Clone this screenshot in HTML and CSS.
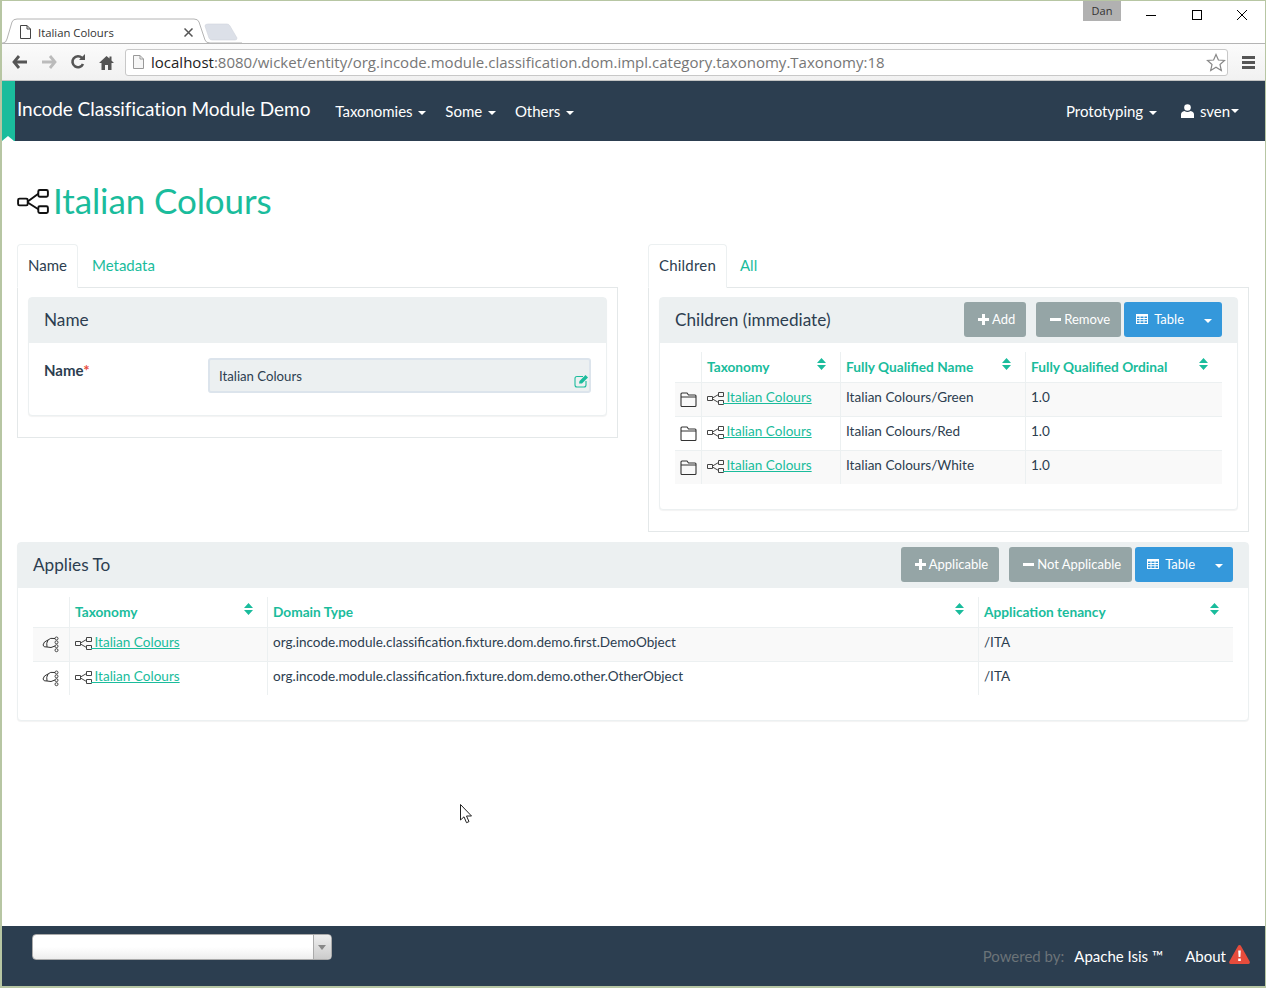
FILE: index.html
```html
<!DOCTYPE html>
<html lang="en">
<head>
    <meta charset="UTF-8">
    <title>Italian Colours</title>
    <link rel="stylesheet" href="styles.css">
</head>
<body>
    <svg class="defs" width="0" height="0">
        <symbol id="tree" viewBox="0 0 33 26">
            <rect x="1" y="10" width="10" height="7" rx="1.5" fill="none" stroke="currentColor" stroke-width="2"/>
            <rect x="22" y="1" width="10" height="7" rx="1.5" fill="none" stroke="currentColor" stroke-width="2"/>
            <rect x="22" y="18" width="10" height="7" rx="1.5" fill="none" stroke="currentColor" stroke-width="2"/>
            <path d="M11 13 L22 5 M11 14 L22 21" fill="none" stroke="currentColor" stroke-width="2"/>
        </symbol>
        <symbol id="mini" viewBox="0 0 17 13">
            <path d="M.5 4.500 H5.500 V8.500 H.5 Z M11.500 .5 H16.500 V4.500 H11.500 Z M11.500 8.500 H16.500 V12.500 H11.500 Z" fill="none" stroke="#444"/>
            <path d="M5.500 6 L11.500 2.500 M5.500 7 L11.500 10.500" fill="none" stroke="#444"/>
        </symbol>
        <symbol id="folder" viewBox="0 0 17 15">
            <path d="M1 13.5 V2 Q1 1 2 1 H7 L8.5 3 H15 Q16 3 16 4 V5 H1.500 M1 13.500 Q1 14.500 2 14.500 H15 Q16 14.500 16 13.500 V5" fill="none" stroke="#333" stroke-width="1.100"/>
        </symbol>
        <symbol id="cloud" viewBox="0 0 17 17">
            <path d="M13 2.500 Q8 1.500 6 4 Q1.500 5.500 1 9 Q1.500 11.500 5 11 Q9 12.500 13 10" fill="none" stroke="#333" stroke-width="1"/>
            <path d="M6 4 Q4 7 5 11" fill="none" stroke="#333" stroke-width="1"/>
            <circle cx="14.500" cy="2.500" r="1.500" fill="#fff" stroke="#333" stroke-width="0.900"/>
            <circle cx="14.500" cy="6.300" r="1.500" fill="#fff" stroke="#333" stroke-width="0.900"/>
            <circle cx="14.500" cy="10.200" r="1.500" fill="#fff" stroke="#333" stroke-width="0.900"/>
            <circle cx="14.500" cy="14.200" r="1.500" fill="#fff" stroke="#333" stroke-width="0.900"/>
        </symbol>
        <symbol id="sort" viewBox="0 0 9 12">
            <path d="M4.500 0 L9 5 H0 Z M0 7 H9 L4.500 12 Z" fill="#1abc9c"/>
        </symbol>
        <symbol id="grid" viewBox="0 0 12 10">
            <path d="M0 0 H12 V10 H0 Z M1 2.500 V4 H3.500 V2.500 Z M4.500 2.500 V4 H7.500 V2.500 Z M8.500 2.500 V4 H11 V2.500 Z M1 5 V6.300 H3.500 V5 Z M4.500 5 V6.300 H7.500 V5 Z M8.500 5 V6.300 H11 V5 Z M1 7.300 V9 H3.500 V7.300 Z M4.500 7.300 V9 H7.500 V7.300 Z M8.500 7.300 V9 H11 V7.300 Z" fill="#fff" fill-rule="evenodd"/>
        </symbol>
    </svg>

    <div class="window">
        <div class="tabstrip">
            <svg class="tab-shape" width="240" height="26" viewBox="0 0 240 26">
                <path d="M203 8 Q203 6 206 6 H225 Q227 6 228 8 L235 20 Q235 22 233 22 H210 Q208 22 207 20 Z" fill="#dce0e8" stroke="#d0d4dc" stroke-width="0.600"/>
                <path d="M0 25 H1 Q4 25 5 21 L10 4 Q11 1 15 1 H192 Q196 1 197 4 L203 22 Q204 25 208 25 H240" fill="#fff" stroke="#b4b4b4"/>
            </svg>
            <div class="tab">
                <svg class="page-icon" width="11" height="14" viewBox="0 0 11 14">
                    <path d="M.5 .5 H7 L10.500 4 V13.500 H.5 Z M7 .5 V4 H10.500" fill="#fff" stroke="#444"/>
                </svg>
                <span class="tab-title">Italian Colours</span>
                <svg class="tab-close" width="9" height="9" viewBox="0 0 9 9"><path d="M.5 .5 L8.500 8.500 M8.500 .5 L.5 8.500" stroke="#555" stroke-width="1.500"/></svg>
            </div>
            <span class="profile">Dan</span>
            <div class="win-buttons">
                <svg width="12" height="12" viewBox="0 0 12 12"><path d="M1 6.500 H11" stroke="#000"/></svg>
                <svg width="12" height="12" viewBox="0 0 12 12"><rect x="1.500" y="1.500" width="9" height="9" fill="none" stroke="#000"/></svg>
                <svg width="12" height="12" viewBox="0 0 12 12"><path d="M1 1 L11 11 M11 1 L1 11" stroke="#000"/></svg>
            </div>
        </div>

        <div class="toolbar">
            <svg class="tool" width="16" height="14" viewBox="0 0 16 14"><path d="M7 1 L2 7 L7 13 M2 7 H15" fill="none" stroke="#555" stroke-width="2.800"/></svg>
            <svg class="tool" width="16" height="14" viewBox="0 0 16 14"><path d="M9 1 L14 7 L9 13 M14 7 H1" fill="none" stroke="#bbb" stroke-width="2.800"/></svg>
            <svg class="tool" width="16" height="16" viewBox="0 0 16 16"><path d="M13 10 A5.500 5.500 0 1 1 12 4" fill="none" stroke="#555" stroke-width="2.600"/><path d="M9 6 H15 V0 Z" fill="#555"/></svg>
            <svg class="tool" width="15" height="15" viewBox="0 0 15 15"><path d="M7.500 1 L0 8 H2.500 V15 H6 V10 H9 V15 H12.500 V8 H15 L12.500 5.500 V1.500 H10.500 V3.500 Z" fill="#555"/></svg>
            <div class="omnibox">
                <svg width="11" height="14" viewBox="0 0 11 14"><path d="M.5 .5 H7 L10.500 4 V13.500 H.5 Z M7 .5 V4 H10.500" fill="#f6f6f6" stroke="#999"/></svg>
                <span class="url"><span class="host">localhost</span>:8080/wicket/entity/org.incode.module.classification.dom.impl.category.taxonomy.Taxonomy:18</span>
                <svg class="star" width="20" height="19" viewBox="0 0 20 19"><path d="M10 1.500 L12.400 7 L18.500 7.500 L14 11.500 L15.300 17.500 L10 14.300 L4.700 17.500 L6 11.500 L1.500 7.500 L7.600 7 Z" fill="#fff" stroke="#888" stroke-width="1.200"/></svg>
            </div>
            <div class="menu-btn"><span></span><span></span><span></span></div>
        </div>

        <nav class="navbar">
            <a class="brand">Incode Classification Module Demo</a>
            <a class="nav-item">Taxonomies <i class="caret"></i></a>
            <a class="nav-item">Some <i class="caret"></i></a>
            <a class="nav-item">Others <i class="caret"></i></a>
            <span class="nav-spacer"></span>
            <a class="nav-item">Prototyping <i class="caret"></i></a>
            <a class="nav-item user">
                <svg width="13" height="14" viewBox="0 0 13 14"><circle cx="6.500" cy="3.500" r="3.300" fill="#fff"/><path d="M0 14 V10.500 Q0 7.500 3.500 7 Q6.500 9 9.500 7 Q13 7.500 13 10.500 V14 Z" fill="#fff"/></svg>
                sven<i class="caret"></i>
            </a>
        </nav>

        <main class="content">
            <h1 class="title"><svg class="title-icon" width="32" height="25"><use href="#tree"/></svg>Italian Colours</h1>

            <div class="columns">
                <section class="column">
                    <div class="tabs">
                        <a class="tab-link active">Name</a>
                        <a class="tab-link">Metadata</a>
                    </div>
                    <div class="tab-pane">
                        <div class="panel">
                            <div class="panel-head"><h3>Name</h3></div>
                            <div class="field">
                                <label class="field-label">Name<span class="req">*</span></label>
                                <div class="field-value">
                                    Italian Colours
                                    <svg class="edit" width="15" height="14" viewBox="0 0 15 14">
                                        <path d="M9 2.500 H3 Q1 2.500 1 4.500 V11 Q1 13 3 13 H10 Q12 13 12 11 V7" fill="none" stroke="#1abc9c" stroke-width="1.100"/>
                                        <path d="M5 9.500 L5.500 7 L11.500 1 L14 3.500 L8 9.500 Z" fill="#1abc9c"/>
                                    </svg>
                                </div>
                            </div>
                        </div>
                    </div>
                </section>

                <section class="column">
                    <div class="tabs wide">
                        <a class="tab-link active">Children</a>
                        <a class="tab-link">All</a>
                    </div>
                    <div class="tab-pane">
                        <div class="panel">
                            <div class="panel-head">
                                <h3>Children (immediate)</h3>
                                <div class="actions">
                                    <a class="btn"><i class="plus"></i>Add</a>
                                    <a class="btn"><i class="minus"></i>Remove</a>
                                    <a class="btn blue"><svg width="12" height="10"><use href="#grid"/></svg><span class="btn-label">Table</span><i class="caret"></i></a>
                                </div>
                            </div>
                            <div class="table-wrap">
                                <table class="grid">
                                    <colgroup><col class="c-26"><col class="c-139"><col class="c-185"><col></colgroup>
                                    <thead>
                                        <tr>
                                            <th></th>
                                            <th><div class="th-in">Taxonomy<svg width="9" height="12"><use href="#sort"/></svg></div></th>
                                            <th><div class="th-in">Fully Qualified Name<svg width="9" height="12"><use href="#sort"/></svg></div></th>
                                            <th><div class="th-in">Fully Qualified Ordinal<svg width="9" height="12"><use href="#sort"/></svg></div></th>
                                        </tr>
                                    </thead>
                                    <tbody>
                                        <tr class="odd">
                                            <td class="row-icon"><svg width="17" height="15"><use href="#folder"/></svg></td>
                                            <td><svg class="mini-tree" width="17" height="13"><use href="#mini"/></svg><a class="link"> Italian Colours</a></td>
                                            <td>Italian Colours/Green</td>
                                            <td>1.0</td>
                                        </tr>
                                        <tr>
                                            <td class="row-icon"><svg width="17" height="15"><use href="#folder"/></svg></td>
                                            <td><svg class="mini-tree" width="17" height="13"><use href="#mini"/></svg><a class="link"> Italian Colours</a></td>
                                            <td>Italian Colours/Red</td>
                                            <td>1.0</td>
                                        </tr>
                                        <tr class="odd">
                                            <td class="row-icon"><svg width="17" height="15"><use href="#folder"/></svg></td>
                                            <td><svg class="mini-tree" width="17" height="13"><use href="#mini"/></svg><a class="link"> Italian Colours</a></td>
                                            <td>Italian Colours/White</td>
                                            <td>1.0</td>
                                        </tr>
                                    </tbody>
                                </table>
                            </div>
                        </div>
                    </div>
                </section>
            </div>

            <div class="panel applies">
                <div class="panel-head">
                    <h3>Applies To</h3>
                    <div class="actions">
                        <a class="btn"><i class="plus"></i>Applicable</a>
                        <a class="btn"><i class="minus"></i>Not Applicable</a>
                        <a class="btn blue"><svg width="12" height="10"><use href="#grid"/></svg><span class="btn-label">Table</span><i class="caret"></i></a>
                    </div>
                </div>
                <div class="table-wrap">
                    <table class="grid">
                        <colgroup><col class="c-36"><col class="c-198"><col class="c-711"><col></colgroup>
                        <thead>
                            <tr>
                                <th></th>
                                <th><div class="th-in">Taxonomy<svg width="9" height="12"><use href="#sort"/></svg></div></th>
                                <th><div class="th-in">Domain Type<svg width="9" height="12"><use href="#sort"/></svg></div></th>
                                <th><div class="th-in">Application tenancy<svg width="9" height="12"><use href="#sort"/></svg></div></th>
                            </tr>
                        </thead>
                        <tbody>
                            <tr class="odd">
                                <td class="row-icon"><svg width="17" height="17"><use href="#cloud"/></svg></td>
                                <td><svg class="mini-tree" width="17" height="13"><use href="#mini"/></svg><a class="link"> Italian Colours</a></td>
                                <td>org.incode.module.classification.fixture.dom.demo.first.DemoObject</td>
                                <td>/ITA</td>
                            </tr>
                            <tr>
                                <td class="row-icon"><svg width="17" height="17"><use href="#cloud"/></svg></td>
                                <td><svg class="mini-tree" width="17" height="13"><use href="#mini"/></svg><a class="link"> Italian Colours</a></td>
                                <td>org.incode.module.classification.fixture.dom.demo.other.OtherObject</td>
                                <td>/ITA</td>
                            </tr>
                        </tbody>
                    </table>
                </div>
            </div>
        </main>

        <footer class="footer">
            <div class="select"><span class="select-arrow"></span></div>
            <span class="nav-spacer"></span>
            <span class="powered">Powered by:</span>
            <a class="foot-link isis">Apache Isis ™</a>
            <a class="foot-link">About</a>
            <svg class="warn" width="21" height="19" viewBox="0 0 21 19">
                <path d="M10.500 0 Q11.500 0 12 1 L20.700 16.500 Q21.300 18.500 19.500 19 H1.500 Q-.3 18.500 .3 16.500 L9 1 Q9.500 0 10.500 0 Z" fill="#e74c3c"/>
                <path d="M9.200 5.500 H11.800 L11.400 12 H9.600 Z M9.200 13.500 H11.800 V16 H9.200 Z" fill="#fff"/>
            </svg>
        </footer>

        <svg class="cursor" width="13" height="20" viewBox="0 0 13 20">
            <path d="M.5 .5 V16 L4 12.800 L6.500 18.700 L9 17.600 L6.500 12 H11.500 Z" fill="#fff" stroke="#222"/>
        </svg>
    </div>
</body>
</html>
```

FILE: styles.css
```css
* {
    box-sizing: border-box;
}

html, body {
    margin: 0;
    height: 988px;
    overflow: hidden;
}

body {
    font-family: Lato, sans-serif;
    font-size: 14px;
    color: #2c3e50;
    background: #fff;
}

.defs {
    position: absolute;
}

.window {
    position: relative;
    display: flex;
    flex-direction: column;
    height: 988px;
    border: solid #b7c6a3;
    border-width: 1px 1px 2px 2px;
}

/* browser chrome */
.tabstrip {
    position: relative;
    display: flex;
    height: 43px;
    background: #fff;
    border-bottom: 1px solid #b4b4b4;
}

.tab-shape {
    position: absolute;
    left: 0;
    bottom: -1px;
}

.tab {
    position: relative;
    display: flex;
    align-items: center;
    width: 173px;
    height: 22px;
    margin: 20px 0 0 18px;
}

.tab-title {
    margin-left: 7px;
    font-family: "Open Sans", sans-serif;
    font-size: 11.3px;
    color: #333;
}

.tab-close {
    margin-left: auto;
}

.profile {
    position: absolute;
    top: 0;
    left: 1081px;
    width: 38px;
    height: 20px;
    background: #b1b1b1;
    font-family: "Open Sans", sans-serif;
    font-size: 11px;
    line-height: 20px;
    text-align: center;
    color: #333;
}

.win-buttons {
    position: absolute;
    top: 8px;
    right: 17px;
    display: flex;
    gap: 33.5px;
}

.toolbar {
    display: flex;
    align-items: center;
    height: 37px;
    padding: 0 10px 0 10px;
    background: linear-gradient(#fbfbfb, #f1f1f1);
    border-bottom: 1px solid #c4c4c4;
}

.tool {
    margin-right: 13px;
    flex: none;
}

.omnibox {
    display: flex;
    align-items: center;
    width: 1104px;
    height: 27px;
    margin-left: -2px;
    padding: 0 8px 0 7px;
    background: #fff;
    border: 1px solid #c8c8c8;
    border-radius: 3px;
}

.url {
    margin-left: 7px;
    font-family: "Open Sans", sans-serif;
    font-size: 15.02px;
    color: #777;
    white-space: nowrap;
}

.host {
    color: #222;
}

.star {
    margin-left: auto;
    margin-right: -6.5px;
}

.menu-btn {
    display: flex;
    flex-direction: column;
    gap: 2px;
    margin-left: 14px;
}

.menu-btn span {
    width: 13px;
    height: 3px;
    background: #555;
}

/* navbar */
.navbar {
    position: relative;
    display: flex;
    align-items: center;
    height: 60px;
    padding-left: 15px;
    padding-right: 26px;
    background: #2c3e50;
    color: #fff;
    border-left: 13px solid #1abc9c;
}

.navbar::after {
    content: "";
    position: absolute;
    left: -13px;
    bottom: 0;
    border: solid transparent;
    border-width: 0 6.5px 5px;
    border-bottom-color: #fff;
}

.brand {
    margin-left: -13px;
    margin-right: 25px;
    margin-bottom: 6px;
    font-size: 19px;
    letter-spacing: -0.06px;
}

.nav-item {
    margin-right: 19px;
    font-size: 15px;
    letter-spacing: -0.03px;
}

.user {
    display: flex;
    align-items: center;
    gap: 6px;
    margin-left: 5px;
    margin-right: 0;
}

.caret {
    display: inline-block;
    width: 0;
    height: 0;
    margin-left: 2px;
    vertical-align: middle;
    border-top: 4px solid #fff;
    border-left: 4px solid transparent;
    border-right: 4px solid transparent;
}

.user .caret {
    margin-left: -5px;
}

.nav-spacer {
    flex: 1;
}

/* content */
.content {
    flex: 1;
    padding: 0 16px 0 15px;
}

.title {
    display: flex;
    align-items: center;
    height: 46px;
    margin: 36px 0 21px;
    font-size: 35px;
    letter-spacing: -0.1px;
    font-weight: 400;
    color: #1abc9c;
}

.title-icon {
    margin-top: 2px;
    margin-right: 4px;
    color: #111;
}

.columns {
    display: grid;
    grid-template-columns: 601px 601px;
    column-gap: 30px;
    align-items: start;
}

.tabs {
    display: flex;
    height: 43px;
}

.tab-link {
    padding: 0 11px;
    font-size: 15px;
    line-height: 42px;
    color: #1abc9c;
    margin-right: 3px;
}

.tab-link.active {
    color: #2c3e50;
    background: #fff;
    border: 1px solid #ecf0f1;
    border-bottom-color: #fff;
    border-radius: 4px 4px 0 0;
    height: 44px;
    padding: 0 10px;
    line-height: 40px;
    position: relative;
}

.tabs.wide .active {
    margin-right: 2px;
    letter-spacing: 0.2px;
}

.tab-pane {
    padding: 9px 10px 10px;
    border: 1px solid #e4e8e9;
}

.panel {
    margin-bottom: 11px;
    background: #fff;
    border: 1px solid #ecf0f1;
    border-radius: 4px;
    box-shadow: 0 1px 1px rgba(0, 0, 0, 0.05);
}

.panel-head {
    display: flex;
    align-items: center;
    height: 45px;
    padding: 0 15px 0 15px;
    background: #ecf0f1;
}

.panel-head h3 {
    margin: 0 0 2px;
    font-size: 17.2px;
    font-weight: 400;
}

.actions {
    display: flex;
    margin-left: auto;
    margin-top: -2px;
}

.btn {
    display: flex;
    align-items: center;
    height: 35px;
    margin-left: 10px;
    padding: 0 11px 1px 14px;
    background: #95a5a6;
    border-radius: 3px;
    color: #fff;
    font-size: 13px;
}

.btn + .btn.blue {
    margin-left: 3px;
    padding: 0 10px 1px 12px;
    background: #3498db;
}

.btn .caret {
    margin: 3px 0 0;
}

.btn-label {
    margin-left: 6px;
    margin-right: 20px;
}

.plus {
    width: 11px;
    height: 11px;
    margin-right: 3px;
    background:
        linear-gradient(#fff, #fff) center / 11px 3px no-repeat,
        linear-gradient(#fff, #fff) center / 3px 11px no-repeat;
}

.minus {
    width: 11px;
    height: 3px;
    margin-right: 3px;
    background: #fff;
}

.field {
    display: flex;
    height: 72px;
    padding: 15px 15px 0;
}

.field-label {
    width: 164px;
    font-size: 15px;
    font-weight: 700;
    padding-top: 3px;
}

.req {
    color: #e74c3c;
}

.field-value {
    position: relative;
    flex: 1;
    height: 35px;
    padding: 0 9px;
    background: #ecf0f1;
    border: 2px solid #dce4ec;
    border-radius: 3px;
    font-size: 13.2px;
    line-height: 32px;
}

.edit {
    position: absolute;
    right: 0;
    bottom: 3px;
}

.table-wrap {
    padding: 9px 15px 25px;
}

.applies {
    margin-bottom: 0;
    margin-top: 10px;
}

.grid {
    width: 100%;
    table-layout: fixed;
    border-collapse: collapse;
}

.c-26 { width: 26px; }
.c-139 { width: 139px; }
.c-185 { width: 185px; }
.c-36 { width: 36px; }
.c-198 { width: 198px; }
.c-711 { width: 711px; }

.grid th {
    height: 30px;
    padding: 0 5px 0 5.5px;
    border-left: 1px solid #ecf0f1;
    border-bottom: 1px solid #ecf0f1;
    color: #1abc9c;
    font-size: 13.7px;
    font-weight: 700;
    text-align: left;
}

.grid th:first-child,
.grid td:first-child {
    border-left: 0;
}

.th-in {
    display: flex;
    justify-content: space-between;
    padding-right: 9px;
}

.grid td {
    height: 34px;
    padding: 0 5px 4px 5.5px;
    font-size: 13.55px;
    border-left: 1px solid #ecf0f1;
    border-bottom: 1px solid #ecf0f1;
}

.grid tbody tr:last-child td {
    border-bottom: 0;
}

.grid .odd td {
    background: #f9f9f9;
}

.grid td.row-icon {
    padding: 0 0 0 5px;
    line-height: 0;
    vertical-align: middle;
}

.applies td.row-icon {
    padding-left: 9px;
}

.mini-tree {
    margin: 0 -.5px;
    vertical-align: -3px;
}

.link {
    color: #1abc9c;
    text-decoration: underline;
}

/* footer */
.footer {
    display: flex;
    align-items: center;
    height: 60px;
    padding: 0 15px 0 30px;
    background: #2c3e50;
    color: #fff;
    font-size: 15px;
}

.select {
    position: relative;
    width: 300px;
    height: 26px;
    margin-top: -19px;
    background: linear-gradient(#fff 50%, #eee);
    border: 1px solid #aaa;
    border-radius: 4px;
}

.select-arrow {
    position: absolute;
    top: 0;
    right: 0;
    width: 18px;
    height: 24px;
    background: linear-gradient(#eee, #ccc);
    border-left: 1px solid #aaa;
    border-radius: 0 4px 4px 0;
}

.select-arrow::after {
    content: "";
    position: absolute;
    top: 10px;
    left: 4px;
    border-top: 5px solid #888;
    border-left: 4px solid transparent;
    border-right: 4px solid transparent;
}

.powered {
    color: #6b7378;
}

.foot-link {
    margin-left: 10px;
}

.isis {
    margin-right: 12px;
}

.warn {
    margin-left: 3px;
    margin-bottom: 3px;
}

.cursor {
    position: absolute;
    left: 458px;
    top: 803px;
}
```
